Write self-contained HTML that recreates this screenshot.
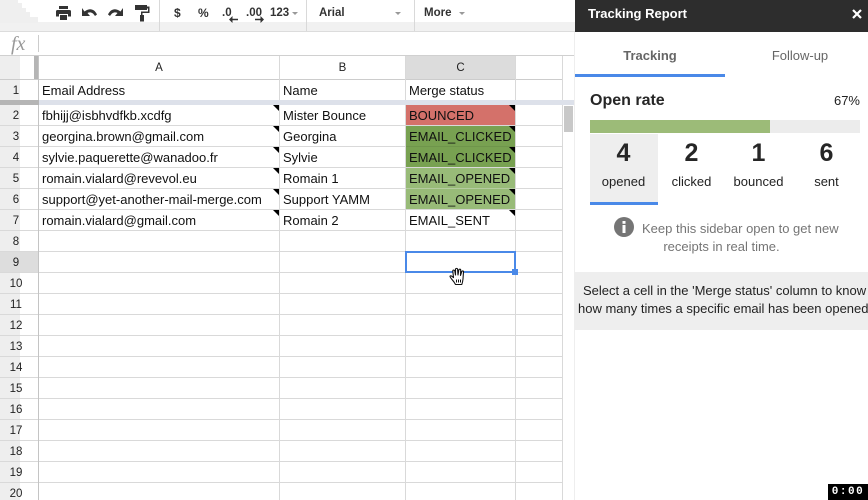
<!DOCTYPE html>
<html><head><meta charset="utf-8">
<style>
html,body{margin:0;padding:0;background:#fff}
#p{position:relative;width:868px;height:500px;overflow:hidden;background:#fff;font-family:"Liberation Sans",Arial,sans-serif;color:#111}
#p div,#p svg{position:absolute}
.h{height:1px;background:#d9d9d9}
.v{width:1px;background:#d9d9d9}
.t{font-size:13px;line-height:20px;height:20px;white-space:nowrap;margin-top:1px}
.n{font-size:11.5px;line-height:20px;height:20px;left:0;width:32px;text-align:center;color:#222;margin-top:1px}
.c{font-size:11.5px;line-height:24px;height:24px;top:56px;text-align:center;color:#222}
.m{width:0;height:0;border-top:6px solid #000;border-left:6px solid transparent}
.s{font-size:12.5px;font-weight:bold;color:#333;top:5px;line-height:16px;white-space:nowrap}
.ca{width:0;height:0;border-top:3px solid #999;border-left:3px solid transparent;border-right:3px solid transparent;top:12px}
.st{text-align:center;width:67px;top:130px}
.st b{position:absolute;left:0;right:0;top:8px;font-size:25px;line-height:30px;color:#262626}
.st span{position:absolute;left:0;right:0;top:43px;font-size:13px;line-height:18px;color:#222}
</style></head><body><div id="p">

<!-- toolbar -->
<div style="left:0;top:22px;width:575px;height:9px;background:#f1f1f1"></div>
<svg style="left:0;top:0" width="40" height="23"><path d="M0 0H18V3H22V8H26V12H30V17H38V23H0Z" fill="#efefef"/></svg>
<div style="left:0;top:31px;width:575px;height:1px;background:#dcdcdc"></div>
<div class="v" style="left:159px;top:0;height:31px"></div>
<div class="v" style="left:306px;top:0;height:31px"></div>
<div class="v" style="left:414px;top:0;height:31px"></div>

<svg style="left:56px;top:6px" width="15" height="14" viewBox="0 0 15 14"><path d="M3 0H12V3H3ZM1.500 4H13.500A1.500 1.500 0 0 1 15 5.500V10.500H12V8H3V10.500H0V5.500A1.500 1.500 0 0 1 1.500 4ZM4 9H11V14H4Z" fill="#333"/></svg>
<svg style="left:82px;top:8px" width="15" height="9" viewBox="0 0 15 9"><path d="M4 2.500C8 0 12.500 1 15 6.500L13 8C11 4.500 8 3.500 5.500 5L8 8H0V0L2.500 3.500Z" fill="#333"/></svg>
<svg style="left:108px;top:8px" width="15" height="9" viewBox="0 0 15 9"><path d="M11 2.500C7 0 2.500 1 0 6.500L2 8C4 4.500 7 3.500 9.500 5L7 8H15V0L12.500 3.500Z" fill="#333"/></svg>
<svg style="left:135px;top:4px" width="15" height="18" viewBox="0 0 15 18"><path d="M0 1H12V6H0ZM12 2.500H14.500V9H7.500V11H9V17.500H5V11H6V7.500H13V4.500H12Z" fill="#333"/></svg>

<div class="s" style="left:174px;font-size:12px">$</div>
<div class="s" style="left:198px;font-size:12px">%</div>
<div class="s" style="left:222px;font-size:11.500px">.0</div>
<div class="s" style="left:246px;font-size:11.500px">.00</div>
<svg style="left:229px;top:16px" width="9" height="7"><path d="M0 3.500L3.500 0V2.800H9V4.200H3.500V7Z" fill="#333"/></svg>
<svg style="left:255px;top:16px" width="9" height="7"><path d="M9 3.500L5.500 0V2.800H0V4.200H5.500V7Z" fill="#333"/></svg>
<div class="s" style="left:270px;font-size:11.500px">123</div>
<div class="ca" style="left:292px"></div>
<div class="s" style="left:319px;font-size:11.500px">Arial</div>
<div class="ca" style="left:395px"></div>
<div class="s" style="left:424px;font-size:11.500px">More</div>
<div class="ca" style="left:459px"></div>

<!-- formula bar -->
<div style="left:11px;top:33px;font:italic 20px 'Liberation Serif',serif;line-height:22px;color:#999">fx</div>
<div class="v" style="left:38px;top:35px;height:17px;background:#ccc"></div>
<div style="left:0;top:55px;width:575px;height:1px;background:#d0d0d0"></div>

<!-- row header bg -->
<div style="left:0;top:56px;width:20px;height:444px;background:#eee"></div>
<div style="left:0;top:252px;width:38px;height:20px;background:#ddd"></div>
<div style="left:34px;top:56px;width:4px;height:23px;background:#b5b5b5"></div>
<div style="left:406px;top:56px;width:109px;height:23px;background:#dcdcdc"></div>

<!-- grid horizontal -->
<div class="h" style="left:0;top:79px;width:563px;background:#ccc"></div>
<div class="h" style="left:0;top:125px;width:563px"></div>
<div class="h" style="left:0;top:146px;width:563px"></div>
<div class="h" style="left:0;top:167px;width:563px"></div>
<div class="h" style="left:0;top:188px;width:563px"></div>
<div class="h" style="left:0;top:209px;width:563px"></div>
<div class="h" style="left:0;top:230px;width:563px"></div>
<div class="h" style="left:0;top:251px;width:563px"></div>
<div class="h" style="left:0;top:272px;width:563px"></div>
<div class="h" style="left:0;top:293px;width:563px"></div>
<div class="h" style="left:0;top:314px;width:563px"></div>
<div class="h" style="left:0;top:335px;width:563px"></div>
<div class="h" style="left:0;top:356px;width:563px"></div>
<div class="h" style="left:0;top:377px;width:563px"></div>
<div class="h" style="left:0;top:398px;width:563px"></div>
<div class="h" style="left:0;top:419px;width:563px"></div>
<div class="h" style="left:0;top:440px;width:563px"></div>
<div class="h" style="left:0;top:461px;width:563px"></div>
<div class="h" style="left:0;top:482px;width:563px"></div>

<!-- grid vertical -->
<div class="v" style="left:38px;top:56px;height:444px;background:#c4c4c4"></div>
<div class="v" style="left:279px;top:56px;height:444px"></div>
<div class="v" style="left:405px;top:56px;height:444px"></div>
<div class="v" style="left:515px;top:56px;height:444px"></div>
<div class="v" style="left:562px;top:56px;height:444px"></div>

<!-- frozen band -->
<div style="left:0;top:100px;width:39px;height:5px;background:#b5b5b5"></div>
<div style="left:39px;top:100px;width:536px;height:5px;background:#dde1ea"></div>

<!-- status fills -->
<div style="left:406px;top:105px;width:109px;height:20px;background:#d4716a"></div>
<div style="left:406px;top:126px;width:109px;height:41px;background:#78a151"></div>
<div class="h" style="left:406px;top:146px;width:109px;background:#6f954b"></div>
<div style="left:406px;top:168px;width:109px;height:41px;background:#98bb78"></div>
<div class="h" style="left:406px;top:188px;width:109px;background:#b5ccA0"></div>

<!-- headers -->
<div class="c" style="left:39px;width:240px">A</div>
<div class="c" style="left:280px;width:125px">B</div>
<div class="c" style="left:406px;width:109px">C</div>

<!-- row numbers -->
<div class="n" style="top:80px">1</div>
<div class="n" style="top:105px">2</div>
<div class="n" style="top:126px">3</div>
<div class="n" style="top:147px">4</div>
<div class="n" style="top:168px">5</div>
<div class="n" style="top:189px">6</div>
<div class="n" style="top:210px">7</div>
<div class="n" style="top:231px">8</div>
<div class="n" style="top:252px">9</div>
<div class="n" style="top:273px">10</div>
<div class="n" style="top:294px">11</div>
<div class="n" style="top:315px">12</div>
<div class="n" style="top:336px">13</div>
<div class="n" style="top:357px">14</div>
<div class="n" style="top:378px">15</div>
<div class="n" style="top:399px">16</div>
<div class="n" style="top:420px">17</div>
<div class="n" style="top:441px">18</div>
<div class="n" style="top:462px">19</div>
<div class="n" style="top:483px">20</div>

<!-- cells -->
<div class="t" style="left:42px;top:80px">Email Address</div>
<div class="t" style="left:283px;top:80px">Name</div>
<div class="t" style="left:409px;top:80px">Merge status</div>

<div class="t" style="left:42px;top:105px">fbhijj@isbhvdfkb.xcdfg</div>
<div class="t" style="left:283px;top:105px">Mister Bounce</div>
<div class="t" style="left:409px;top:105px">BOUNCED</div>
<div class="t" style="left:42px;top:126px">georgina.brown@gmail.com</div>
<div class="t" style="left:283px;top:126px">Georgina</div>
<div class="t" style="left:409px;top:126px">EMAIL_CLICKED</div>
<div class="t" style="left:42px;top:147px">sylvie.paquerette@wanadoo.fr</div>
<div class="t" style="left:283px;top:147px">Sylvie</div>
<div class="t" style="left:409px;top:147px">EMAIL_CLICKED</div>
<div class="t" style="left:42px;top:168px">romain.vialard@revevol.eu</div>
<div class="t" style="left:283px;top:168px">Romain 1</div>
<div class="t" style="left:409px;top:168px">EMAIL_OPENED</div>
<div class="t" style="left:42px;top:189px">support@yet-another-mail-merge.com</div>
<div class="t" style="left:283px;top:189px">Support YAMM</div>
<div class="t" style="left:409px;top:189px">EMAIL_OPENED</div>
<div class="t" style="left:42px;top:210px">romain.vialard@gmail.com</div>
<div class="t" style="left:283px;top:210px">Romain 2</div>
<div class="t" style="left:409px;top:210px">EMAIL_SENT</div>

<!-- note markers -->
<div class="m" style="left:273px;top:105px"></div>
<div class="m" style="left:273px;top:126px"></div>
<div class="m" style="left:273px;top:147px"></div>
<div class="m" style="left:273px;top:168px"></div>
<div class="m" style="left:273px;top:189px"></div>
<div class="m" style="left:273px;top:210px"></div>
<div class="m" style="left:509px;top:105px"></div>
<div class="m" style="left:509px;top:126px"></div>
<div class="m" style="left:509px;top:147px"></div>
<div class="m" style="left:509px;top:168px"></div>
<div class="m" style="left:509px;top:189px"></div>
<div class="m" style="left:509px;top:210px"></div>

<!-- selection -->
<div style="left:405px;top:251px;width:107px;height:18px;border:2px solid #4a89e8"></div>
<div style="left:512px;top:269px;width:6px;height:6px;background:#4a89e8"></div>

<!-- scrollbar -->
<div style="left:564px;top:106px;width:9px;height:26px;background:#c8c8c8"></div>
<div style="left:575px;top:0;width:293px;height:500px;background:#fff"></div>
<div style="left:574px;top:32px;width:1px;height:468px;background:#eeeeee"></div>

<!-- cursor -->
<svg style="left:449px;top:267px" width="18" height="19" viewBox="0 0 18 19"><path d="M5 15C3.500 13 1.500 11 1 9.500C1 8.500 2.500 8.500 3.500 9.800L4.500 10.500L3.800 4C3.800 2.800 5.500 2.800 5.800 4L6.500 8L6.500 2.500C6.500 1 8.500 1 8.600 2.500L9 8L9.800 3C10 1.800 11.800 2 11.700 3.300L11.500 8.500L12.800 4.500C13.200 3.500 14.800 3.800 14.500 5L14 12C13.800 14 13.500 15.500 12.800 17.500H6.500Z" fill="#fff" stroke="#111" stroke-width="1.100" stroke-linejoin="round"/><path d="M7.500 12.500V15.500M9.500 12.500V15.500M11.500 12.500V15.500" stroke="#111" stroke-width="1"/></svg>

<!-- sidebar -->
<div style="left:575px;top:0;width:293px;height:32px;background:#2d2d2d"></div>
<div style="left:588px;top:5px;font-size:13px;font-weight:bold;color:#fff;line-height:18px;white-space:nowrap">Tracking Report</div>
<svg style="left:852px;top:9px" width="10" height="10"><path d="M1 1L9 9M9 1L1 9" stroke="#fff" stroke-width="2.200"/></svg>

<div style="left:575px;top:46px;width:150px;text-align:center;font-size:13px;font-weight:bold;line-height:20px;color:#666">Tracking</div>
<div style="left:725px;top:46px;width:150px;text-align:center;font-size:13px;line-height:20px;color:#666">Follow-up</div>
<div style="left:575px;top:74px;width:150px;height:3px;background:#4a89e8"></div>

<div style="left:590px;top:91px;font-size:16px;font-weight:bold;line-height:20px;color:#262626">Open rate</div>
<div style="left:800px;top:92px;width:60px;text-align:right;font-size:13px;line-height:18px;color:#222">67%</div>

<div style="left:590px;top:120px;width:270px;height:13px;background:#ececec"></div>
<div style="left:590px;top:120px;width:180px;height:13px;background:#9cbb78"></div>

<div style="left:590px;top:134px;width:68px;height:68px;background:#eee"></div>
<div style="left:590px;top:202px;width:68px;height:3px;background:#4a89e8"></div>
<div class="st" style="left:590px"><b>4</b><span>opened</span></div>
<div class="st" style="left:658px"><b>2</b><span>clicked</span></div>
<div class="st" style="left:725px"><b>1</b><span>bounced</span></div>
<div class="st" style="left:793px"><b>6</b><span>sent</span></div>

<svg style="left:614px;top:217px" width="20" height="20" viewBox="0 0 20 20"><circle cx="10" cy="10" r="10" fill="#757575"/><rect x="8.500" y="4" width="3" height="2.800" fill="#fff"/><rect x="8.500" y="8" width="3" height="8" fill="#fff"/></svg>
<div style="left:642px;top:220px;font-size:13px;line-height:18px;color:#757575;white-space:nowrap">Keep this sidebar open to get new</div>
<div style="left:575px;top:238px;width:293px;text-align:center;font-size:13px;line-height:18px;color:#757575">receipts in real time.</div>

<div style="left:575px;top:272px;width:293px;height:58px;background:#eee"></div>
<div style="left:583px;top:282px;font-size:13px;line-height:18px;color:#222;white-space:nowrap">Select a cell in the 'Merge status' column to know</div>
<div style="left:578px;top:300px;font-size:13px;line-height:18px;color:#222;white-space:nowrap">how many times a specific email has been opened</div>

<!-- timer -->
<div style="left:828px;top:484px;width:40px;height:16px;background:#000"></div>
<div style="left:828px;top:484px;width:40px;height:16px;text-align:center;font:bold 11px/16px 'Liberation Mono',monospace;color:#fff;letter-spacing:1.500px">0:00</div>

</div></body></html>
